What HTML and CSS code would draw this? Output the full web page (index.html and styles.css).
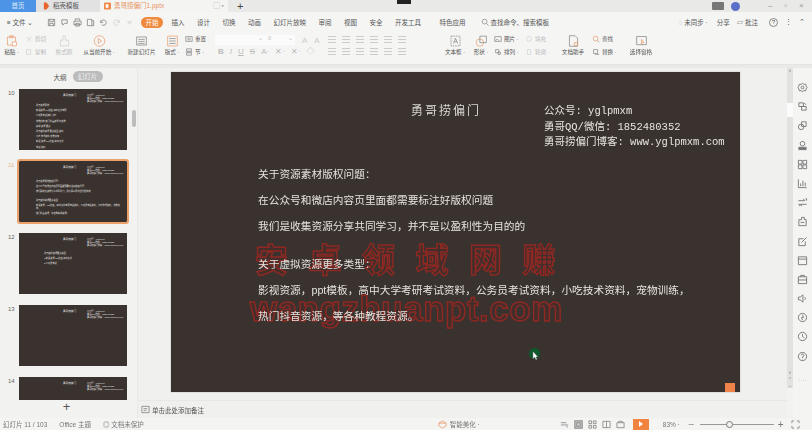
FILE: index.html
```html
<!DOCTYPE html>
<html lang="zh-CN">
<head>
    <meta charset="UTF-8">
    <title>勇哥捞偏门1.pptx</title>
    <link rel="stylesheet" href="styles.css">
</head>
<body>
<div class="app">

    <!-- Tabs -->
    <div class="tabbar">
        <div class="tab tab-home">首页</div>
        <div class="tab tab-tpl"><svg class="tab-logo" viewBox="0 0 8 8"><path d="M1 0h3l3 4-3 4H1z" fill="#e8642c"/></svg>稻壳模板</div>
        <div class="tab tab-doc"><svg class="tab-logo" viewBox="0 0 8 8"><rect width="8" height="8" rx="1" fill="#f08a4b"/><rect x="2" y="2" width="3" height="4" fill="#fff"/></svg>勇哥捞偏门1.pptx<span class="tab-tools">▢ ▪</span></div>
        <div class="tab-add">+</div>
        <div class="tabbar-right">
            <span class="cam-mark"></span>
            <span class="user-box"></span>
            <span class="avatar"></span>
            <span class="win-btn">–</span>
            <span class="win-btn">▫</span>
            <span class="win-btn">×</span>
        </div>
    </div>

    <!-- Menu -->
    <div class="menubar">
        <span class="file-menu">≡ 文件 ⌄</span>
        <div class="quick">
            <svg viewBox="0 0 10 10"><path d="M1.5 1.5h7v7h-7zM3 1.5v2.5h4V1.5M3 8.5V6h4v2.5"/></svg>
            <svg viewBox="0 0 10 10"><path d="M2 2h6v4H5L3 8V6H2z"/></svg>
            <svg viewBox="0 0 10 10"><path d="M2.5 3V1h5v2M1 3.5h8v4H1zM3 6h4v3H3z"/></svg>
            <svg viewBox="0 0 10 10"><path d="M1.5 1.5h5v7h-5zM6.5 3h2v5.5h-2"/></svg>
            <svg viewBox="0 0 10 10"><path d="M2 5a3 3 0 1 1 1 2.4M2 2.5V5h2.4"/></svg>
            <svg class="faint" viewBox="0 0 10 10"><path d="M8 5a3 3 0 1 0-1 2.4M8 2.5V5H5.600"/></svg>
            <svg class="faint" viewBox="0 0 10 10"><path d="M3 4h4L5 7z"/></svg>
        </div>
        <span class="menu-active">开始</span>
        <div class="menu-items">
            <span>插入</span><span>设计</span><span>切换</span><span>动画</span><span>幻灯片放映</span><span>审阅</span><span>视图</span><span>安全</span><span>开发工具</span><span class="menu-gap">特色应用</span>
        </div>
        <span class="menu-search"><svg viewBox="0 0 10 10"><circle cx="4.500" cy="4.500" r="3"/><path d="M7 7l2.500 2.500"/></svg>查找命令、搜索模板</span>
        <div class="menu-right">
            <span class="sync">◌ 未同步 ·</span>
            <span>分享</span>
            <span>▱ 批注</span>
            <span class="help">?</span>
            <span>⋮</span>
            <span>⌃</span>
        </div>
    </div>

    <!-- Ribbon -->
    <div class="ribbon">
        <div class="big">
            <svg viewBox="0 0 16 16"><path class="o" d="M3 3h10v10H3zM6 1.500h4V4H6z"/><path class="o" d="M9 9h5v5H9z" fill="#fff"/></svg>
            <span>粘贴 ·</span>
        </div>
        <div class="stack off">
            <span><svg viewBox="0 0 10 10"><path d="M2 2l5 6M8 2L3 8"/></svg>剪切</span>
            <span><svg viewBox="0 0 10 10"><path d="M2 2h5v6H2z"/></svg>复制</span>
        </div>
        <div class="big off">
            <svg viewBox="0 0 16 16"><path d="M6 2h3v5h4v7H3V7h3z"/></svg>
            <span>格式刷</span>
        </div>
        <div class="big">
            <svg viewBox="0 0 16 16"><circle class="o" cx="8" cy="8" r="6.500"/><path class="o" d="M6.500 5l4 3-4 3z"/></svg>
            <span>从当前开始 ·</span>
        </div>
        <div class="big">
            <svg viewBox="0 0 16 16"><path d="M2 3h12v10H2zM4 6h8M4 8.500h8M4 11h8"/></svg>
            <span>新建幻灯片</span>
        </div>
        <div class="big">
            <svg viewBox="0 0 16 16"><path class="o" d="M2 2h12v12H2z"/><path d="M4 5h8M4 8h8M4 11h8"/></svg>
            <span>版式 ·</span>
        </div>
        <div class="stack">
            <span><svg viewBox="0 0 10 10"><path d="M1 2h8v6H1zM3 4h4M3 6h4"/></svg>重置</span>
            <span><svg viewBox="0 0 10 10"><path d="M2 1h6v3H2zM2 6h6v3H2zM1 5h8"/></svg>节 ·</span>
        </div>
        <div class="font-group">
            <div class="font-row">
                <span class="font-box">⌄</span>
                <span class="size-box">0<i>⌄</i></span>
                <span class="font-grow">A</span>
                <span class="font-grow">A</span>
            </div>
            <div class="format-row">
                <b>B</b><i>I</i><u>U</u><s>S</s><span>A·</span><span>✕·</span><span>✕·</span><span>◇</span>
            </div>
        </div>
        <div class="para-group">
            <div class="para-row">
                <span class="para"></span><span class="para"></span><span class="para"></span><span class="para"></span><span class="para"></span><span class="para"></span>
            </div>
            <div class="para-row">
                <span class="para"></span><span class="para"></span><span class="para"></span><span class="para"></span><span class="para"></span><span class="para"></span>
            </div>
        </div>
        <div class="big">
            <svg viewBox="0 0 16 16"><path d="M2.500 2h11v12h-11z" stroke-dasharray="2 1"/><path d="M5.500 11L8 4.500 10.500 11M6.500 9h3"/></svg>
            <span>文本框 ·</span>
        </div>
        <div class="big">
            <svg viewBox="0 0 16 16"><circle class="o" cx="6" cy="10" r="4.500"/><path d="M6 2h8v8H6z"/></svg>
            <span>形状 ·</span>
        </div>
        <div class="stack">
            <span><svg viewBox="0 0 10 10"><path d="M1 2h8v6H1zM2 7l2-2 2 2"/></svg>图片 ·</span>
            <span><svg viewBox="0 0 10 10"><path d="M2 2h4v4H2zM5 5h3v3H5z"/></svg>排列 ·</span>
        </div>
        <div class="stack off">
            <span><svg viewBox="0 0 10 10"><circle cx="5" cy="5" r="3"/></svg>填充</span>
            <span><svg viewBox="0 0 10 10"><path d="M3 2h4v6H3z"/></svg>轮廓 ·</span>
        </div>
        <div class="big">
            <svg viewBox="0 0 16 16"><path d="M3 1.500h7l3 3v10H3z"/><path class="o" d="M9 10h4v4H9z"/></svg>
            <span>文档助手</span>
        </div>
        <div class="stack">
            <span><svg viewBox="0 0 10 10"><circle class="o" cx="4.500" cy="4.500" r="3"/><path d="M7 7l2 2"/></svg>查找</span>
            <span><svg viewBox="0 0 10 10"><path d="M2 2h5v5H2zM4 8h5"/></svg>替换 ·</span>
        </div>
        <div class="big">
            <svg viewBox="0 0 16 16"><path d="M2 2.500h12v10H2z"/><path class="o" d="M8 6l3 4-2 0-1 2z"/></svg>
            <span>选择窗格</span>
        </div>
    </div>
    <div class="ribbon-foot"></div>

    <div class="main">

        <!-- Slide list -->
        <aside class="panel">
            <div class="panel-tabs">
                <span>大纲</span>
                <span class="panel-pill">幻灯片</span>
            </div>
            <div class="thumbs">
                <div class="thumb-row">
                    <span class="thumb-no">10</span>
                    <div class="thumb">
                        <div class="t-head"><span>勇哥捞偏门</span><span>公众号：yglpmxm<br>勇哥QQ/微信：1852480352<br>勇哥捞偏门博客：www.yglpmxm.com</span></div>
                        <div class="t-body t-ten">
                            <p>关于资源素材</p><p>影视资源 ppt模板 高中大学考研</p><p>公务员考试资料 小吃</p><p>宠物训练 热门抖音资源 等各种</p><p>教程 资源 更多</p><p>关于虚拟资源 更多类型 资料</p><p>小吃 技术资料 宠物训练</p><p>影视 资源 ppt 模板 高中大学</p><p>考试 资料</p>
                        </div>
                    </div>
                </div>
                <div class="thumb-row is-current">
                    <span class="thumb-no">11</span>
                    <div class="thumb">
                        <div class="t-head"><span>勇哥捞偏门</span><span>公众号：yglpmxm<br>勇哥QQ/微信：1852480352<br>勇哥捞偏门博客：www.yglpmxm.com</span></div>
                        <div class="t-body">
                            <p>关于资源素材版权问题：</p><p>在公众号和微店内容页里面都需要标注好版权问题</p><p>我们是收集资源分享共同学习，并不是以盈利性为目的的</p><p class="t-gap">关于虚拟资源更多类型：</p><p>影视资源，ppt模板，高中大学考研考试资料，公务员考试资料，小吃技术资料，宠物训练，</p><p>热门抖音资源，等各种教程资源。</p>
                        </div>
                    </div>
                </div>
                <div class="thumb-row">
                    <span class="thumb-no">12</span>
                    <div class="thumb">
                        <div class="t-head"><span>勇哥捞偏门</span><span>公众号：yglpmxm<br>勇哥QQ/微信：1852480352<br>勇哥捞偏门博客：www.yglpmxm.com</span></div>
                        <div class="t-body t-twelve">
                            <p>关于虚拟资源更多类型</p><p>1.影视资源 ppt模板 高中大学</p><p>2.公务员考试</p>
                        </div>
                    </div>
                </div>
                <div class="thumb-row">
                    <span class="thumb-no">13</span>
                    <div class="thumb">
                        <div class="t-head"><span>勇哥捞偏门</span><span>公众号：yglpmxm<br>勇哥QQ/微信：1852480352<br>勇哥捞偏门博客：www.yglpmxm.com</span></div>
                    </div>
                </div>
                <div class="thumb-row">
                    <span class="thumb-no">14</span>
                    <div class="thumb thumb-cut">
                        <div class="t-head"><span>勇哥捞偏门</span><span>公众号：yglpmxm<br>勇哥QQ/微信：1852480352<br>勇哥捞偏门博客：www.yglpmxm.com</span></div>
                    </div>
                </div>
            </div>
            <div class="panel-add">+</div>
        </aside>

        <!-- Editing area -->
        <main class="editor">
            <div class="canvas">
                <section class="slide">
                    <div class="watermark">
                        <div class="wm-cn">安卓领域网赚</div>
                        <div class="wm-en">wangzhuanpt.com</div>
                    </div>
                    <header class="slide-head">
                        <h1>勇哥捞偏门</h1>
                        <div class="slide-contact">
                            <p>公众号: yglpmxm</p>
                            <p>勇哥QQ/微信: 1852480352</p>
                            <p>勇哥捞偏门博客: www.yglpmxm.com</p>
                        </div>
                    </header>
                    <div class="slide-body">
                        <p>关于资源素材版权问题：</p>
                        <p>在公众号和微店内容页里面都需要标注好版权问题</p>
                        <p>我们是收集资源分享共同学习，并不是以盈利性为目的的</p>
                        <p class="slide-gap">关于虚拟资源更多类型：</p>
                        <p>影视资源，ppt模板，高中大学考研考试资料，公务员考试资料，小吃技术资料，宠物训练，</p>
                        <p>热门抖音资源，等各种教程资源。</p>
                    </div>
                    <span class="cursor-dot"></span>
                    <svg class="cursor" viewBox="0 0 8 11"><path d="M1 0v9l2-2 1.500 3 1.500-.7L4.500 6.500H7z" fill="#fff" stroke="#333" stroke-width=".5"/></svg>
                    <span class="corner-mark"></span>
                </section>
            </div>
            <div class="notes">
                <svg viewBox="0 0 10 10"><path d="M1 1.500h8v7H1zM3 4h4M3 6h3"/></svg>
                <span>单击此处添加备注</span>
            </div>
        </main>

        <div class="vscroll">
            <span class="vscroll-arrow">˄</span>
            <span class="vscroll-thumb"></span>
            <span class="vscroll-end">˅<br>⌃<br>⌄</span>
        </div>

        <!-- Right rail -->
        <nav class="rail">
            <svg viewBox="0 0 12 12"><path d="M6 1.500l1.500 1 2 0 .5 2 1 1.500-1 1.500-.5 2-2 0L6 10.500l-1.500-1-2 0-.5-2L1 6l1-1.500.5-2 2 0z"/><circle cx="6" cy="6" r="1.500"/></svg>
            <svg viewBox="0 0 12 12"><path d="M2 2h5v4H2zM5 6h5v4H5zM8 2.500l2 1.500"/></svg>
            <svg viewBox="0 0 12 12"><path d="M5 2h5v5H5z"/><circle cx="4.500" cy="7.500" r="3"/></svg>
            <svg viewBox="0 0 12 12"><circle cx="6" cy="4" r="2.500"/><path d="M2 10.500h8V8H2z" fill="#777"/></svg>
            <svg viewBox="0 0 12 12"><path d="M1.500 1.500h4v4h-4zM6.500 1.500h4v4h-4zM1.500 6.500h4v4h-4zM6.500 6.500h4v4h-4z"/></svg>
            <svg viewBox="0 0 12 12"><path d="M1.500 1.500v9h9M4 9V6M6.500 9V3M9 9V5"/></svg>
            <svg viewBox="0 0 12 12"><path d="M1.500 4h7l-2-2M10.500 8h-7l2 2M9 2h1.500v2M1.500 8H3v2"/></svg>
            <svg viewBox="0 0 12 12"><path d="M2 10.500V4h3V1.500h3V4h2v6.500zM4 7h4"/></svg>
            <svg viewBox="0 0 12 12"><path d="M2 3h5M2 3v7.500h7V6M5 7l5.500-5.500"/></svg>
            <svg viewBox="0 0 12 12"><path d="M1.500 2h9v8.500h-9zM1.500 4.500h9"/></svg>
            <svg viewBox="0 0 12 12"><path d="M1.500 3h9v7.500h-9zM4 3V1.500h4V3M1.500 6.500h9"/></svg>
            <svg viewBox="0 0 12 12"><path d="M1.500 4.500h2L6.500 2v8L3.500 7.500h-2zM8.500 4.500a2 2 0 0 1 0 3"/></svg>
            <svg viewBox="0 0 12 12"><circle cx="6" cy="6" r="4.500"/><path d="M6 3l1 3H5l1 3"/></svg>
            <svg viewBox="0 0 12 12"><circle cx="6" cy="6" r="4.500"/><path d="M6 3.500V6l2 1.500"/></svg>
            <svg viewBox="0 0 12 12"><circle cx="6" cy="6" r="4.500"/><path d="M4.500 4.500a1.500 1.500 0 1 1 1.500 1.800V7.500M6 8.500v.5"/></svg>
            <span class="rail-more">····</span>
        </nav>
    </div>

    <!-- Status bar -->
    <footer class="statusbar">
        <span>幻灯片 11 / 103</span>
        <span class="status-theme">Office 主题</span>
        <span class="status-protect">◎ 文档未保护</span>
        <span class="status-smart"><svg viewBox="0 0 10 10"><path class="o" d="M5 1l4 2.500v3L5 9 1 6.500v-3zM1 3.500h8"/></svg>智能美化 ·</span>
        <div class="views">
            <svg viewBox="0 0 10 10"><path d="M1 3h6M1 5.500h8M7 7l1 1 1-1"/></svg>
            <svg class="view-on" viewBox="0 0 10 10"><path d="M1 1h8v8H1zM3 3h4v4H3z"/></svg>
            <svg viewBox="0 0 10 10"><path d="M1 1h3v3H1zM6 1h3v3H6zM1 6h3v3H1zM6 6h3v3H6z"/></svg>
            <svg viewBox="0 0 10 10"><path d="M1 1.500h8v7H1zM5 1.500v7"/></svg>
            <svg viewBox="0 0 10 10"><path d="M1 3h8v5.500H1zM3 3V1.500h4V3"/></svg>
        </div>
        <span class="play"><i></i></span>
        <span class="zoom-val">83% ·</span>
        <span class="zoom-minus">–</span>
        <div class="slider"><span class="knob"></span></div>
        <span class="zoom-plus">+</span>
        <svg class="fit" viewBox="0 0 10 10"><path d="M1 3.500V1h2.500M9 3.500V1H6.500M1 6.500V9h2.500M9 6.500V9H6.500"/></svg>
    </footer>
</div>
</body>
</html>
```

FILE: styles.css
```css
* {
    box-sizing: border-box;
}
body {
    margin: 0;
    width: 812px;
    height: 430px;
    overflow: hidden;
    background-color: #f2f2f1;
    font-family: "Liberation Sans", "Noto Sans CJK SC", sans-serif;
    color: #555;
}
p, h1 {
    margin: 0;
    font-weight: normal;
}
svg {
    fill: none;
    stroke: #777;
    stroke-width: .8;
    flex: none;
}
svg .o {
    stroke: #e9935f;
}
.app {
    display: flex;
    flex-direction: column;
    height: 430px;
    filter: blur(.6px);
}

/* Tabs */
.tabbar {
    display: flex;
    height: 12px;
    background-color: #e9e9e8;
    font-size: 6.5px;
    line-height: 12px;
}
.tab {
    display: flex;
    align-items: center;
    gap: 3px;
}
.tab-logo {
    width: 7px;
    height: 8px;
    stroke: none;
}
.tab-home {
    width: 36px;
    justify-content: center;
    background-color: #4d94e6;
    color: #dce9f8;
}
.tab-tpl {
    width: 64px;
    padding-left: 7px;
    background-color: #e2e2e2;
}
.tab-doc {
    width: 128px;
    padding-left: 4px;
    background-color: #f4f4f3;
    color: #e9935f;
}
.tab-tools {
    margin-left: 46px;
    color: #aaa;
}
.tab-add {
    margin-left: 9px;
    font-size: 11px;
    color: #444;
}
.tabbar-right {
    flex: 1;
    display: flex;
    align-items: center;
    position: relative;
    padding-right: 3px;
    color: #999;
}
.cam-mark {
    position: absolute;
    left: 154px;
    top: 0;
    width: 14px;
    height: 4px;
    background-color: #222;
}
.user-box {
    margin-left: auto;
    width: 12px;
    height: 8px;
    border-radius: 1px;
    background-color: #777;
}
.avatar {
    margin-left: 7px;
    width: 9px;
    height: 9px;
    border-radius: 50%;
    background-color: #5a6fc8;
}
.win-btn {
    width: 15.5px;
    text-align: center;
    font-size: 8px;
}
.win-btn:nth-of-type(4) {
    margin-left: 23px;
}

/* Menu */
.menubar {
    display: flex;
    align-items: center;
    height: 20px;
    padding-left: 7px;
    background-color: #f5f5f4;
    font-size: 6.5px;
}
.file-menu {
    width: 38px;
}
.quick {
    display: flex;
    gap: 4px;
    width: 96px;
    padding-left: 2px;
}
.quick svg {
    width: 9px;
    height: 9px;
}
.faint {
    stroke: #ccc;
}
.menu-active {
    width: 22px;
    height: 11px;
    border-radius: 6px;
    background-color: #ef8a3d;
    color: #fff;
    text-align: center;
    line-height: 11px;
}
.menu-items {
    display: flex;
    gap: 12.5px;
    margin-left: 8.5px;
}
.menu-gap {
    margin-left: 6px;
}
.menu-search {
    display: flex;
    align-items: center;
    gap: 2px;
    margin-left: 15px;
}
.menu-search svg {
    width: 8px;
    height: 8px;
}
.menu-right {
    display: flex;
    align-items: center;
    gap: 7px;
    margin-left: auto;
    padding-right: 7px;
}
.sync {
    margin-right: 2px;
}
.help {
    width: 9px;
    height: 9px;
    border: 1px solid #888;
    border-radius: 50%;
    font-size: 6px;
    line-height: 7px;
    text-align: center;
    margin-left: 4px;
}

/* Ribbon */
.ribbon {
    display: grid;
    grid-template-columns: 23px 29px 24px 46px 39px 22px 29px 110px 118px 30px 22px 31px 33px 34px 32px 38px;
    height: 32px;
    padding-top: 1px;
    background-color: #f5f5f4;
    font-size: 5.6px;
    white-space: nowrap;
}
.big {
    display: flex;
    flex-direction: column;
    align-items: center;
}
.big svg {
    width: 13px;
    height: 14px;
    margin-top: 1px;
}
.big span {
    line-height: 9px;
    margin-top: 0;
}
.stack {
    display: flex;
    flex-direction: column;
    justify-content: space-between;
    padding: 2px 0 8px 2px;
}
.stack span {
    display: flex;
    align-items: center;
    gap: 2px;
}
.stack svg {
    width: 8px;
    height: 8px;
}
.off {
    color: #bbb;
}
.off svg {
    stroke: #ccc;
}
.font-group {
    padding: 2px 0 0 3px;
}
.font-row {
    display: flex;
    align-items: center;
    height: 10px;
    color: #bbb;
}
.font-box {
    width: 50px;
    height: 10px;
    background-color: #fbfbfb;
    text-align: right;
    padding-right: 2px;
}
.size-box {
    display: flex;
    justify-content: space-between;
    width: 30px;
    height: 10px;
    background-color: #fbfbfb;
    padding: 0 2px 0 3px;
}
.size-box i {
    font-style: normal;
}
.font-grow {
    margin-left: 7px;
    font-size: 8px;
    color: #ccc;
}
.format-row {
    display: flex;
    gap: 6px;
    margin-top: 2px;
    padding-left: 3px;
    font-size: 8px;
    line-height: 10px;
    color: #bbb;
}
.para-group {
    display: flex;
    flex-direction: column;
    gap: 5px;
    padding: 3px 0 0 6px;
}
.para-row {
    display: flex;
    gap: 6px;
}
.para {
    width: 8px;
    height: 7px;
    border-top: 1px solid #ccc;
    border-bottom: 1px solid #ccc;
    background: linear-gradient(#ccc, #ccc) center / 100% 1px no-repeat;
}
.ribbon-foot {
    height: 4px;
    background-color: #e9e9e8;
    border-top: 1px solid #e4e4e3;
}

/* Main */
.main {
    flex: 1;
    display: flex;
    min-height: 0;
}
.panel {
    display: flex;
    flex-direction: column;
    width: 138px;
    background-color: #f2f2f1;
    border-right: 1px solid #e8e8e7;
    position: relative;
}
.panel::after {
    content: "";
    position: absolute;
    left: 132px;
    top: 42px;
    width: 4px;
    height: 17px;
    border-radius: 2px;
    background-color: #bdbdbd;
}
.panel-tabs {
    display: flex;
    align-items: center;
    justify-content: center;
    gap: 6px;
    height: 21px;
    padding: 0 0 4px 19px;
    font-size: 6.5px;
}
.panel-pill {
    width: 30px;
    height: 11px;
    border-radius: 6px;
    background-color: #bcbcbc;
    color: #eee;
    line-height: 11px;
    text-align: center;
}
.thumbs {
    flex: 1;
    display: flex;
    flex-direction: column;
    gap: 11px;
    overflow: hidden;
}
.thumb-row {
    display: flex;
    flex: none;
    padding-left: 19px;
    position: relative;
}
.thumb-no {
    position: absolute;
    left: 8px;
    top: 1px;
    font-size: 6px;
    color: #666;
}
.is-current .thumb-no {
    color: #e9b18c;
}
.thumb {
    width: 108px;
    height: 61px;
    padding: 5px 3px 0 17px;
    background-color: #3a322e;
    color: #e8e8e8;
    font-size: 2.2px;
    line-height: 3px;
    overflow: hidden;
}
.is-current .thumb {
    outline: 2px solid #e9a06a;
    outline-offset: 0;
    border-radius: 1px;
}
.thumb-cut {
    height: 24px;
}
.t-head {
    display: flex;
    padding-left: 27px;
    gap: 11px;
}
.t-head span:first-child {
    font-size: 2.6px;
}
.t-body {
    margin-top: 5px;
}
.t-body p {
    margin-bottom: 2px;
}
.t-gap {
    margin-top: 6px;
}
.t-ten {
    margin-top: 1px;
    width: 38px;
}
.t-ten p {
    margin-bottom: 2.200px;
}
.t-twelve {
    padding-left: 8px;
}

.panel-add {
    height: 18px;
    text-align: center;
    font-size: 13px;
    line-height: 14px;
    padding-right: 4px;
}

/* Editing area */
.editor {
    flex: 1;
    display: flex;
    flex-direction: column;
    min-width: 0;
    background-color: #f0f0ef;
}
.canvas {
    flex: 1;
    padding: 4px 0 0 33px;
}
.notes {
    display: flex;
    align-items: center;
    gap: 2px;
    height: 18px;
    padding-left: 3px;
    margin-left: 0;
    font-size: 6.5px;
    border-top: 1px solid #e8e8e7;
}
.notes svg {
    width: 9px;
    height: 9px;
}
.slide {
    position: relative;
    width: 569px;
    height: 320px;
    background-color: #3a322e;
    box-shadow: 0 0 1px rgba(0, 0, 0, .4);
    color: #e6e4e0;
    overflow: hidden;
}
.slide-head {
    position: relative;
    display: flex;
    padding: 29px 0 0 240px;
}
.slide-head h1 {
    width: 133px;
    font-size: 12px;
    letter-spacing: 2px;
    line-height: 18px;
    font-family: "Noto Sans CJK SC", serif;
    color: #d8d6d2;
}
.slide-contact {
    padding-top: 3px;
    font-family: "Liberation Mono", "Noto Sans CJK SC", monospace;
    font-size: 10.500px;
    line-height: 15.500px;
}
.slide-body {
    position: relative;
    padding: 15px 0 0 87px;
    font-size: 10.7px;
    line-height: 16px;
}
.slide-body p {
    margin-bottom: 10px;
}
.slide-body .slide-gap {
    margin-top: 22px;
}
.watermark {
    position: absolute;
    left: 0;
    top: 0;
    width: 100%;
    color: rgba(130, 30, 25, .15);
    -webkit-text-stroke: 1.400px rgba(175, 38, 30, .72);
}
.wm-cn {
    position: absolute;
    left: 84px;
    top: 166px;
    font-size: 33px;
    line-height: 46px;
    letter-spacing: 20.500px;
    white-space: nowrap;
    font-weight: bold;
}
.wm-en {
    position: absolute;
    left: 79px;
    top: 215px;
    font-size: 35px;
    line-height: 44px;
    letter-spacing: .5px;
    font-weight: bold;
    white-space: nowrap;
}
.cursor-dot {
    position: absolute;
    left: 358px;
    top: 276px;
    width: 11px;
    height: 11px;
    border-radius: 50%;
    background-color: #0c5a2c;
}
.cursor {
    position: absolute;
    left: 361px;
    top: 279px;
    width: 7px;
    height: 10px;
    stroke: none;
}
.corner-mark {
    position: absolute;
    right: 5px;
    bottom: 0;
    width: 10px;
    height: 9px;
    background-color: #f0834a;
}

/* Scrollbar and rail */
.vscroll {
    display: flex;
    flex-direction: column;
    align-items: center;
    width: 6px;
    height: 320px;
    margin-top: 0;
    background-color: #e2e2e1;
    color: #888;
    font-size: 5px;
    line-height: 6px;
}
.vscroll-arrow {
    height: 35px;
}
.vscroll-thumb {
    width: 6px;
    height: 14px;
    background-color: #fbfbfb;
}
.vscroll-end {
    margin-top: auto;
    text-align: center;
}
.rail {
    display: flex;
    flex-direction: column;
    align-items: center;
    gap: 8.200px;
    width: 19px;
    padding-top: 14px;
    background-color: #f4f4f3;
    position: relative;
}
.rail svg {
    width: 11px;
    height: 11px;
    stroke: #777;
    stroke-width: 1;
}
.rail-more {
    position: absolute;
    top: 309px;
    font-size: 6px;
    color: #999;
}

/* Status bar */
.statusbar {
    display: flex;
    align-items: center;
    height: 12px;
    padding-left: 3px;
    background-color: #f4f4f3;
    font-size: 6.5px;
    color: #777;
    white-space: nowrap;
}
.statusbar svg {
    width: 9px;
    height: 9px;
}
.status-theme {
    margin-left: 12px;
}
.status-protect {
    margin-left: 12px;
}
.status-smart {
    display: flex;
    align-items: center;
    gap: 3px;
    margin-left: 294px;
}
.views {
    display: flex;
    gap: 5px;
    margin-left: 80px;
}
.view-on {
    background-color: #ccc;
}
.play {
    display: flex;
    align-items: center;
    justify-content: center;
    width: 16px;
    height: 11px;
    margin-left: 8px;
    background-color: #f0833f;
}
.play i {
    border-left: 4px solid #fff;
    border-top: 3px solid transparent;
    border-bottom: 3px solid transparent;
}
.zoom-val {
    margin-left: 14px;
}
.zoom-minus {
    margin-left: 9px;
    font-size: 9px;
}
.slider {
    position: relative;
    width: 74px;
    height: 1px;
    margin-left: 6px;
    background-color: #999;
}
.knob {
    position: absolute;
    left: 26px;
    top: -3px;
    width: 7px;
    height: 7px;
    border: 1px solid #777;
    border-radius: 50%;
    background-color: #f4f4f3;
}
.zoom-plus {
    margin-left: 4px;
    font-size: 10px;
}
.fit {
    margin-left: 7px;
}
```
